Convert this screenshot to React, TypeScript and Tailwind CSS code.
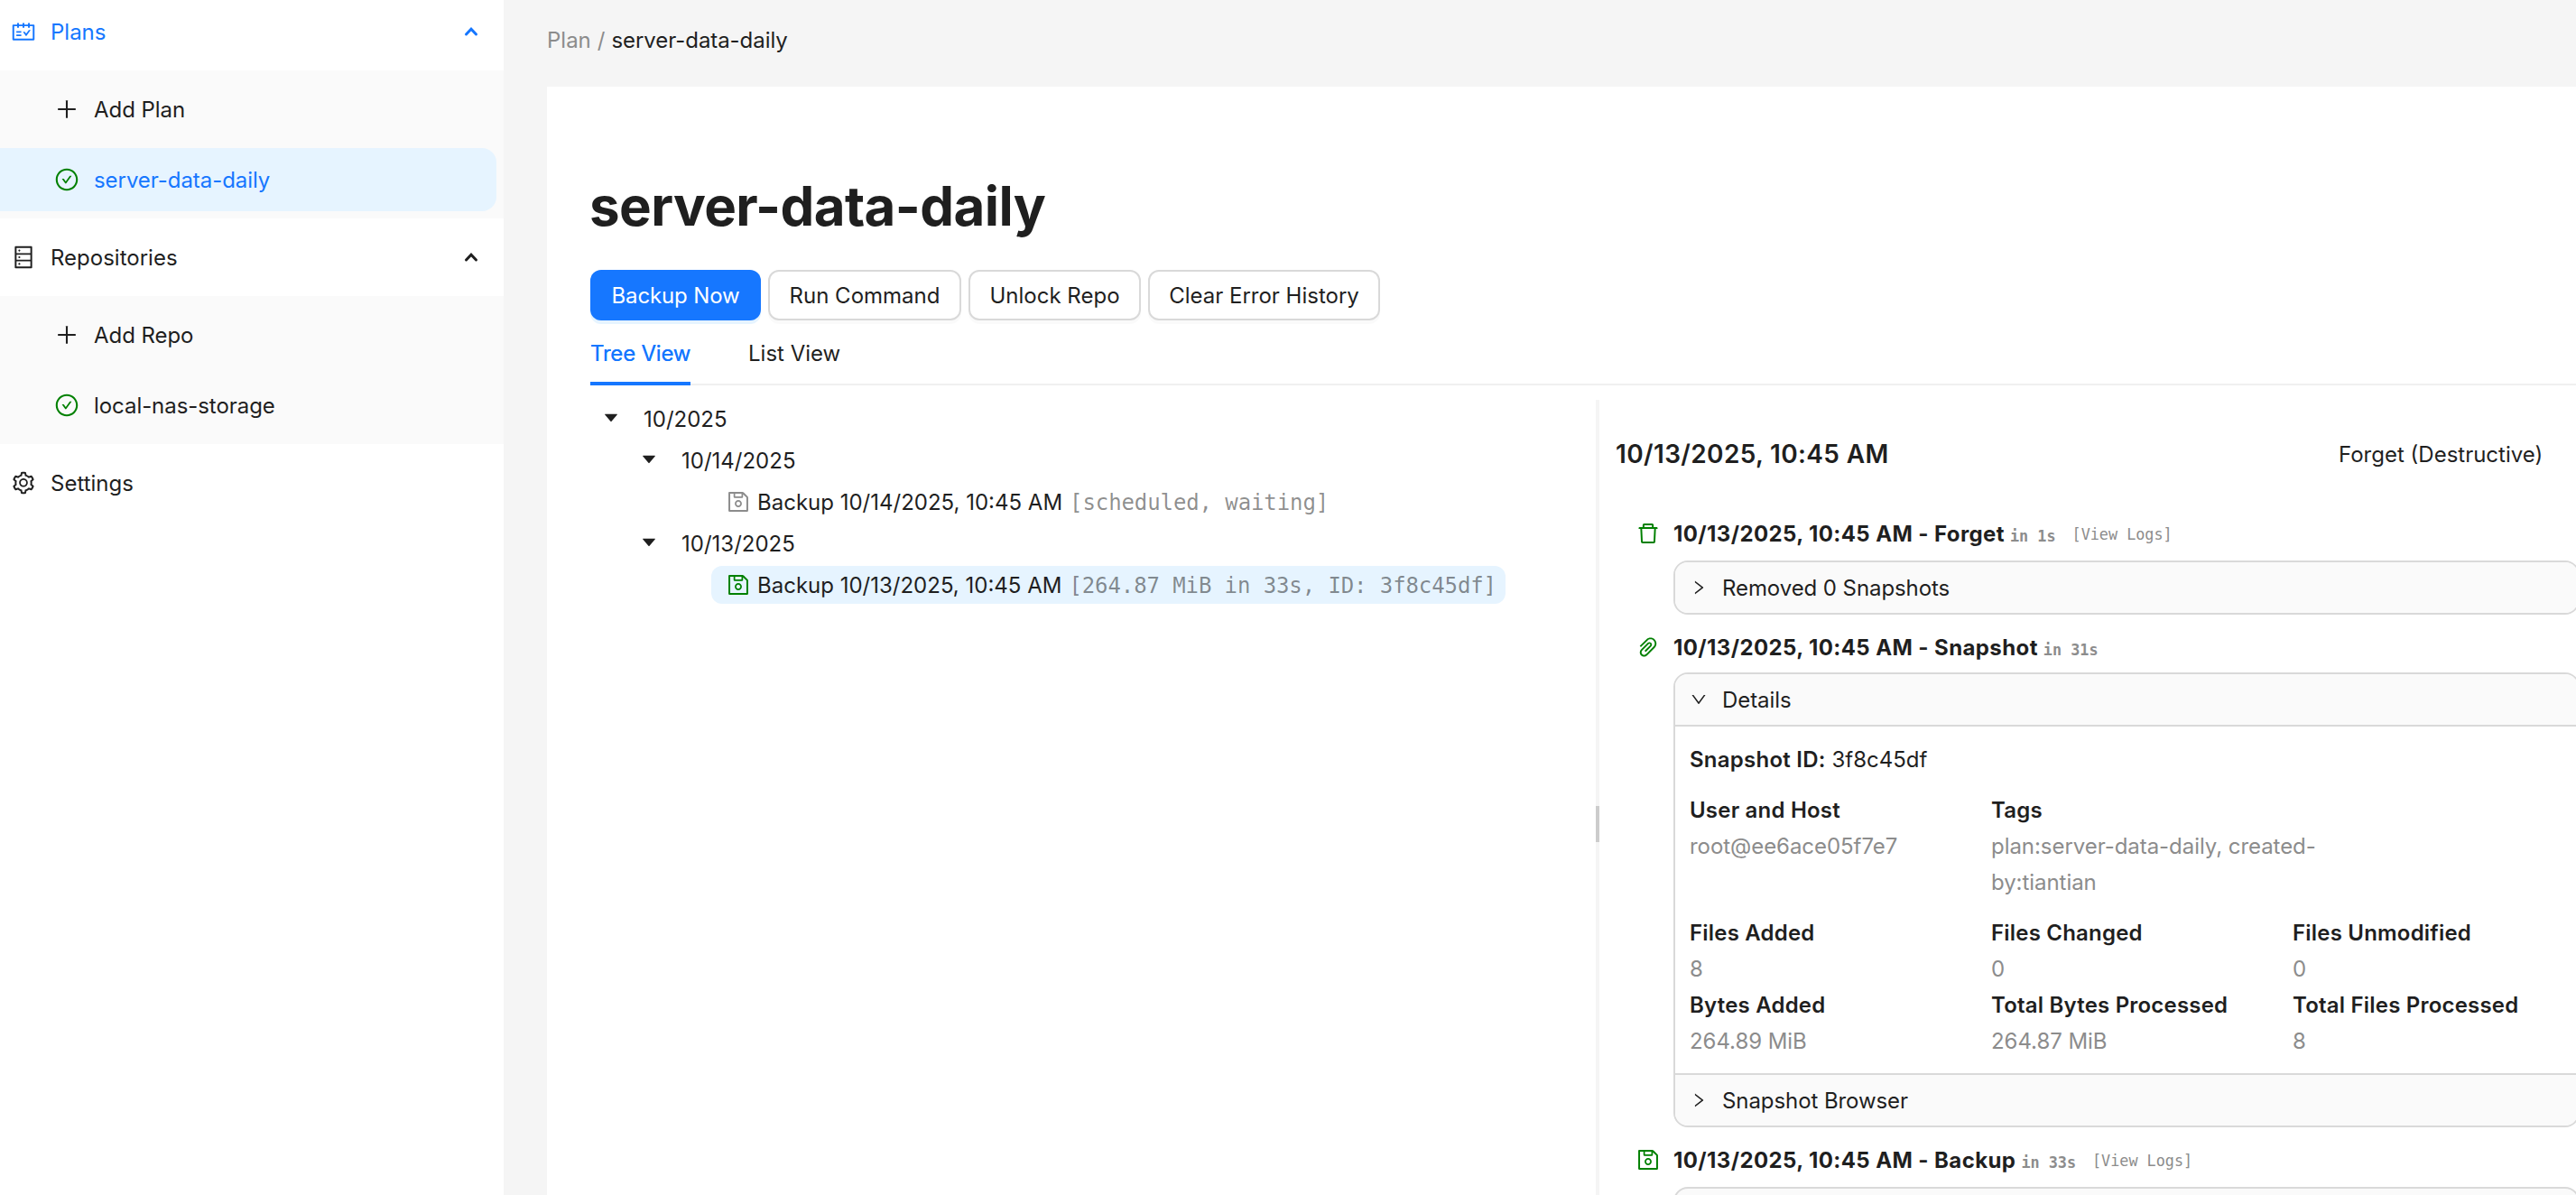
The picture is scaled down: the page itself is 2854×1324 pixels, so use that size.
import React from "react";
import {
  AiFillCaretDown,
  AiOutlineCheckCircle,
  AiOutlineDatabase,
  AiOutlineDelete,
  AiOutlineDown,
  AiOutlinePaperClip,
  AiOutlinePlus,
  AiOutlineRight,
  AiOutlineSave,
  AiOutlineSchedule,
  AiOutlineSetting,
} from "react-icons/ai";

const Chevron = () => (
  <svg width="16" height="12" viewBox="0 0 16 12" fill="none">
    <path
      d="M2.5 9 L8 3.2 L13.5 9"
      stroke="currentColor"
      strokeWidth="3"
      strokeLinecap="round"
    />
  </svg>
);

const MenuHeader = ({ icon, label, className = "", open = true }: any) => (
  <div className={`flex h-[70px] items-center pl-3 pr-7 ${className}`}>
    {icon}
    <span className="ml-4 grow pt-0.5">{label}</span>
    {open && <Chevron />}
  </div>
);

const MenuItem = ({ icon, label, selected = false }: any) => (
  <div
    className={`mr-2 flex h-[70px] items-center rounded-r-2xl pl-[60px] ${
      selected ? "bg-[#e6f4ff] text-[#1677ff]" : ""
    }`}
  >
    {icon}
    <span className="ml-4 pt-0.5 tracking-[-0.06px]">{label}</span>
  </div>
);

const Sidebar = () => (
  <div className="w-[558px] shrink-0 bg-white">
    <MenuHeader
      icon={<AiOutlineSchedule size={28} />}
      label="Plans"
      className="mb-2 text-[#1677ff]"
    />
    <div className="flex flex-col gap-2 bg-[#fafafa] py-2">
      <MenuItem icon={<AiOutlinePlus size={28} />} label="Add Plan" />
      <MenuItem
        icon={<AiOutlineCheckCircle size={28} className="text-[#008000]" />}
        label="server-data-daily"
        selected
      />
    </div>
    <MenuHeader
      icon={<AiOutlineDatabase size={28} />}
      label="Repositories"
      className="my-2"
    />
    <div className="flex flex-col gap-2 bg-[#fafafa] py-2">
      <MenuItem icon={<AiOutlinePlus size={28} />} label="Add Repo" />
      <MenuItem
        icon={<AiOutlineCheckCircle size={28} className="text-[#008000]" />}
        label="local-nas-storage"
      />
    </div>
    <MenuHeader
      icon={<AiOutlineSetting size={28} />}
      label="Settings"
      className="my-2"
      open={false}
    />
  </div>
);

const buttons = [
  { label: "Run Command", width: "w-[214px]" },
  { label: "Unlock Repo", width: "w-[191px]" },
  { label: "Clear Error History", width: "w-[257px]" },
];

const TreeGroup = ({ label, className = "" }: any) => (
  <div className={`flex h-[42px] items-center ${className}`}>
    <AiFillCaretDown size={20} className="-mt-0.5" />
    <span className="ml-[26px] pt-0.5">{label}</span>
  </div>
);

const TreeLeaf = ({ label, meta, iconColor, selected = false }: any) => (
  <div
    className={`ml-[134px] flex h-[42px] items-center self-start rounded-xl pl-4 pr-2.5 ${
      selected ? "bg-[#e6f4ff]" : ""
    }`}
  >
    <AiOutlineSave size={28} className={iconColor} />
    <span className="ml-[7px] whitespace-pre pt-0.5">{label}</span>
    <span className="ml-2 pt-0.5 font-['DejaVu_Sans_Mono',monospace] tracking-[-0.1px] text-[#000000]/45">
      {meta}
    </span>
  </div>
);

const Tree = () => (
  <div className="flex w-[1114px] shrink-0 flex-col gap-1 pt-4">
    <TreeGroup label="10/2025" className="ml-[13px]" />
    <TreeGroup label="10/14/2025" className="ml-[55px]" />
    <TreeLeaf
      label="Backup 10/14/2025, 10:45 AM"
      meta="[scheduled, waiting]"
      iconColor="text-[#8c8c8c]"
    />
    <TreeGroup label="10/13/2025" className="ml-[55px]" />
    <TreeLeaf
      label="Backup 10/13/2025, 10:45 AM"
      meta="[264.87 MiB in 33s, ID: 3f8c45df]"
      iconColor="text-[#008000]"
      selected
    />
  </div>
);

const OperationTitle = ({ icon, name, duration, logs = false }: any) => (
  <div className="flex h-10 items-center">
    <span className="pb-0.5">{icon}</span>
    <span className="ml-3.5 font-bold tracking-[0.4px]">
      10/13/2025, 10:45 AM - {name}
    </span>
    <span className="ml-1.5 mt-1 font-['DejaVu_Sans_Mono',monospace] text-[16.8px] font-bold text-[#8c8c8c]">
      {duration}
    </span>
    {logs && (
      <span className="ml-[18px] font-['DejaVu_Sans_Mono',monospace] text-[16.8px] text-[#8c8c8c]">
        [View Logs]
      </span>
    )}
  </div>
);

const PanelHeader = ({ label, open = false }: any) => (
  <div className="flex h-[56px] items-center bg-[#fafafa] pl-4">
    {open ? <AiOutlineDown size={20} /> : <AiOutlineRight size={20} />}
    <span className="ml-4 pt-0.5 tracking-[-0.08px]">{label}</span>
  </div>
);

const Stat = ({ title, value }: any) => (
  <div className="w-[334px] leading-10">
    <p className="font-semibold tracking-[0.2px]">{title}</p>
    <p className="w-[370px] tracking-[-0.05px] text-[#8c8c8c]">{value}</p>
  </div>
);

const panel =
  "ml-[42px] w-[1004px] overflow-hidden rounded-2xl border-2 border-[#d9d9d9]";

const Details = () => (
  <div className="w-[1082px] shrink-0 pl-[18px]">
    <div className="mt-[46px] flex h-[60px] items-center">
      <p className="w-[801px] text-[28px] font-semibold tracking-[0.35px]">
        10/13/2025, 10:45 AM
      </p>
      <p className="pt-0.5">Forget (Destructive)</p>
    </div>
    <div className="ml-[22px] mt-[39px]">
      <OperationTitle
        icon={<AiOutlineDelete size={28} className="text-[#008000]" />}
        name="Forget"
        duration="in 1s"
        logs
      />
      <div className={`mt-[9px] ${panel}`}>
        <PanelHeader label="Removed 0 Snapshots" />
      </div>
      <div className="mt-[17px]">
        <OperationTitle
          icon={<AiOutlinePaperClip size={28} className="text-[#008000]" />}
          name="Snapshot"
          duration="in 31s"
        />
      </div>
      <div className={`mt-[7px] ${panel}`}>
        <PanelHeader label="Details" open />
        <div className="h-[388px] border-y-2 border-[#d9d9d9] pl-4 pt-[17px]">
          <p className="leading-10">
            <span className="font-semibold tracking-[0.25px]">Snapshot ID:</span> 3f8c45df
          </p>
          <div className="mt-4 flex h-[120px]">
            <Stat title="User and Host" value="root@ee6ace05f7e7" />
            <Stat title="Tags" value="plan:server-data-daily, created-by:tiantian" />
          </div>
          <div className="mt-4 grid grid-cols-[334px_334px_334px]">
            <Stat title="Files Added" value="8" />
            <Stat title="Files Changed" value="0" />
            <Stat title="Files Unmodified" value="0" />
            <Stat title="Bytes Added" value="264.89 MiB" />
            <Stat title="Total Bytes Processed" value="264.87 MiB" />
            <Stat title="Total Files Processed" value="8" />
          </div>
        </div>
        <PanelHeader label="Snapshot Browser" />
      </div>
      <div className="mt-[17px]">
        <OperationTitle
          icon={<AiOutlineSave size={28} className="text-[#008000]" />}
          name="Backup"
          duration="in 33s"
          logs
        />
      </div>
      <div className={`mt-[9px] h-[60px] bg-[#fafafa] ${panel}`} />
    </div>
  </div>
);

const App = () => {
  return (
    <div className="flex h-[1324px] w-[2854px] overflow-hidden bg-[#f5f5f5] font-['Inter',sans-serif] text-[24px] leading-10 text-[#1f1f1f]">
      <Sidebar />
      <div className="flex grow flex-col overflow-hidden pl-12">
        <div className="flex h-24 items-center gap-[7px] pb-1.5">
          <span className="text-[#8c8c8c]">Plan</span>
          <span className="text-[#8c8c8c]">/</span>
          <span className="tracking-[-0.06px]">server-data-daily</span>
        </div>
        <div className="flex grow flex-col bg-white pl-12 pt-[92px]">
          <h1 className="-ml-px h-20 text-[60px] font-bold leading-[80px] tracking-[-0.6px]">
            server-data-daily
          </h1>
          <div className="mt-[31px] flex gap-2">
            <div className="flex h-14 w-[189px] items-center justify-center rounded-xl bg-[#1677ff] pt-0.5 tracking-[-0.15px] text-white shadow-[0_4px_0_rgba(5,145,255,0.1)]">
              Backup Now
            </div>
            {buttons.map((b) => (
              <div
                key={b.label}
                className={`flex h-14 items-center justify-center rounded-xl border-2 border-[#d9d9d9] pt-0.5 shadow-[0_4px_0_rgba(0,0,0,0.02)] ${b.width}`}
              >
                {b.label}
              </div>
            ))}
          </div>
          <div className="flex h-[72px] border-b-2 border-[#f0f0f0]">
            <div className="-mb-0.5 w-[111px] whitespace-nowrap border-b-4 border-[#1677ff] pt-[17px] tracking-[-0.2px] text-[#1677ff] [text-shadow:0_0_0.5px_currentcolor]">
              Tree View
            </div>
            <div className="ml-16 pt-[17px]">List View</div>
          </div>
          <div className="flex h-[897px]">
            <Tree />
            <div className="mt-4 flex h-[940px] w-1 shrink-0 items-center bg-[#f5f5f5]">
              <div className="h-10 w-full bg-[#cccccc]" />
            </div>
            <Details />
          </div>
        </div>
      </div>
    </div>
  );
};

export default App;
